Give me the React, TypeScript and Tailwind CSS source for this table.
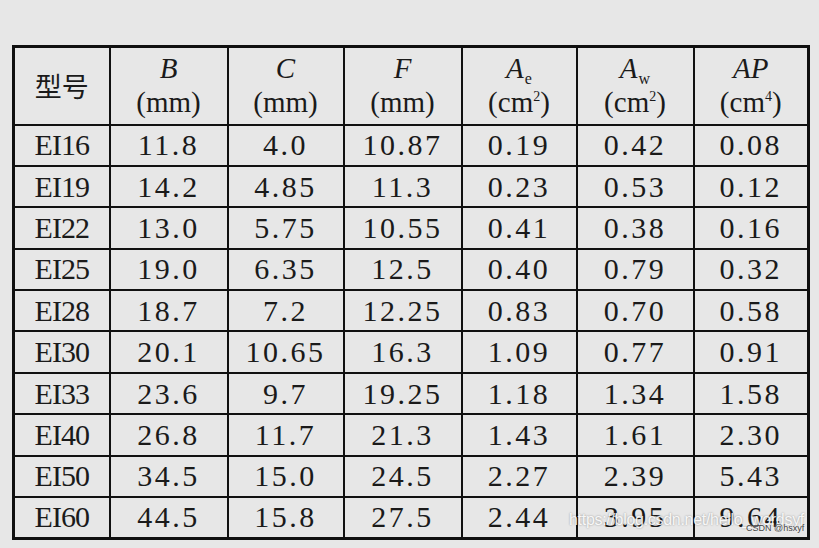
import React from 'react';

const widths = [96, 118, 116, 118, 115, 117, 115];

const rows: string[][] = [
    ['EI16', '11.8', '4.0', '10.87', '0.19', '0.42', '0.08'],
    ['EI19', '14.2', '4.85', '11.3', '0.23', '0.53', '0.12'],
    ['EI22', '13.0', '5.75', '10.55', '0.41', '0.38', '0.16'],
    ['EI25', '19.0', '6.35', '12.5', '0.40', '0.79', '0.32'],
    ['EI28', '18.7', '7.2', '12.25', '0.83', '0.70', '0.58'],
    ['EI30', '20.1', '10.65', '16.3', '1.09', '0.77', '0.91'],
    ['EI33', '23.6', '9.7', '19.25', '1.18', '1.34', '1.58'],
    ['EI40', '26.8', '11.7', '21.3', '1.43', '1.61', '2.30'],
    ['EI50', '34.5', '15.0', '24.5', '2.27', '2.39', '5.43'],
    ['EI60', '44.5', '15.8', '27.5', '2.44', '3.95', '9.64'],
];

const HeadCell: React.FC<{ top: React.ReactNode; unit: React.ReactNode }> = ({ top, unit }) => (
    <div className="flex flex-col items-center leading-[34px] -mt-[2px]">
        <span className="italic">{top}</span>
        <span>{unit}</span>
    </div>
);

const Sub: React.FC<{ c: string }> = ({ c }) => (
    <span className="not-italic text-[16px] leading-none relative top-[6px] ml-[1px]">{c}</span>
);

const Sup: React.FC<{ c: string }> = ({ c }) => (
    <span className="text-[14px] leading-none relative -top-[11px]">{c}</span>
);

const App: React.FC = () => {
    return (
        <div className="w-[819px] h-[548px] bg-[#e7e7e7] pt-[45px] pl-[12px] relative overflow-hidden text-[#1a1a1a] [font-family:'Liberation_Serif','Noto_Sans_CJK_SC',serif]">
            <table className="border-collapse border-[3px] border-[#111] table-fixed">
                <colgroup>
                    {widths.map((w, i) => <col key={i} style={{ width: w }} />)}
                </colgroup>
                <thead>
                    <tr className="h-[78px] text-[29px]">
                        <th className="border-2 border-[#111] font-normal text-[27px] leading-none [font-family:'Noto_Sans_CJK_SC',sans-serif]">型号</th>
                        <th className="border-2 border-[#111] font-normal"><HeadCell top="B" unit="(mm)" /></th>
                        <th className="border-2 border-[#111] font-normal"><HeadCell top="C" unit="(mm)" /></th>
                        <th className="border-2 border-[#111] font-normal"><HeadCell top="F" unit="(mm)" /></th>
                        <th className="border-2 border-[#111] font-normal">
                            <HeadCell top={<>A<Sub c="e" /></>} unit={<>(cm<Sup c="2" />)</>} />
                        </th>
                        <th className="border-2 border-[#111] font-normal">
                            <HeadCell top={<>A<Sub c="w" /></>} unit={<>(cm<Sup c="2" />)</>} />
                        </th>
                        <th className="border-2 border-[#111] font-normal">
                            <HeadCell top="AP" unit={<>(cm<Sup c="4" />)</>} />
                        </th>
                    </tr>
                </thead>
                <tbody>
                    {rows.map((r, ri) => (
                        <tr key={ri} className="h-[41.4px] text-[30px] leading-none">
                            {r.map((c, ci) => (
                                <td key={ci} className={`border-2 border-[#111] text-center p-0 ${ci === 0 ? 'tracking-[-1px]' : 'tracking-[2.5px]'}`}>
                                    {c}
                                </td>
                            ))}
                        </tr>
                    ))}
                </tbody>
            </table>
            <div className="absolute left-[569px] top-[508px] text-[16px] tracking-[-0.3px] text-white/90 [font-family:'Liberation_Sans',sans-serif] [text-shadow:0_0_2px_rgba(0,0,0,0.4)]">
                https://blog.csdn.net/hello_wordsyf
            </div>
            <div className="absolute left-[746px] top-[522px] text-[9px] text-[#444] [font-family:'Liberation_Sans',sans-serif] [text-shadow:0_0_2px_rgba(255,255,255,0.9)]">
                CSDN @hsxyf
            </div>
        </div>
    );
};

export default App;
